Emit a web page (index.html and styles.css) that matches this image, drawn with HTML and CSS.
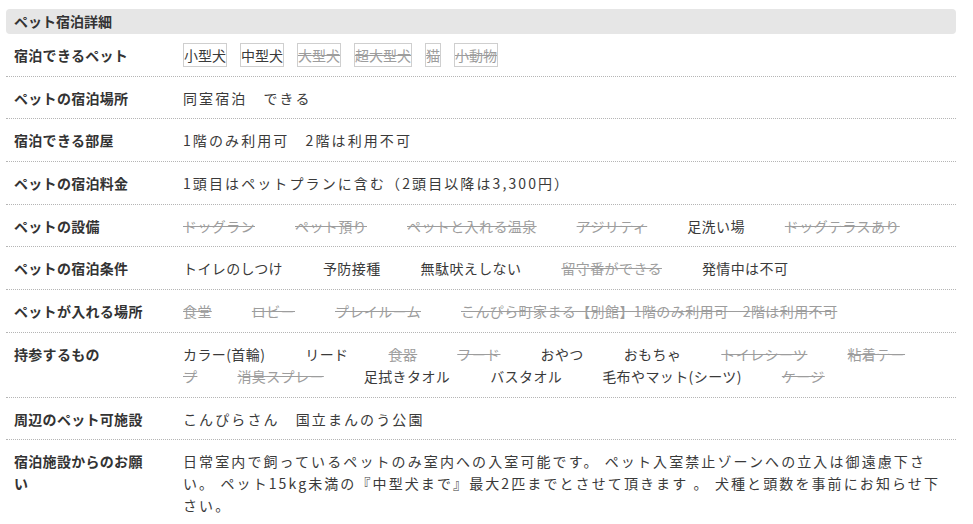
FILE: index.html
```html
<!DOCTYPE html>
<html lang="ja">
<head>
<meta charset="utf-8">
<link rel="stylesheet" href="styles.css">
</head>
<body>
<section class="detail">
  <h2 class="detail-title">ペット宿泊詳細</h2>
  <div class="row">
    <div class="label">宿泊できるペット</div>
    <div class="value boxes">
      <span class="box">小型犬</span><span class="box">中型犬</span><span class="box off">大型犬</span><span class="box off">超大型犬</span><span class="box off">猫</span><span class="box off">小動物</span>
    </div>
  </div>
  <div class="row">
    <div class="label">ペットの宿泊場所</div>
    <div class="value spaced">同室宿泊　できる</div>
  </div>
  <div class="row">
    <div class="label">宿泊できる部屋</div>
    <div class="value spaced">1階のみ利用可　2階は利用不可</div>
  </div>
  <div class="row">
    <div class="label">ペットの宿泊料金</div>
    <div class="value spaced">1頭目はペットプランに含む（2頭目以降は3,300円）</div>
  </div>
  <div class="row">
    <div class="label">ペットの設備</div>
    <div class="value items"><span class="item off">ドッグラン</span><span class="item off">ペット預り</span><span class="item off">ペットと入れる温泉</span><span class="item off">アジリティ</span><span class="item">足洗い場</span><span class="item off">ドッグテラスあり</span></div>
  </div>
  <div class="row">
    <div class="label">ペットの宿泊条件</div>
    <div class="value items"><span class="item">トイレのしつけ</span><span class="item">予防接種</span><span class="item">無駄吠えしない</span><span class="item off">留守番ができる</span><span class="item">発情中は不可</span></div>
  </div>
  <div class="row">
    <div class="label">ペットが入れる場所</div>
    <div class="value items"><span class="item off">食堂</span><span class="item off">ロビー</span><span class="item off">プレイルーム</span><span class="item off">こんぴら町家まる【別館】1階のみ利用可　2階は利用不可</span></div>
  </div>
  <div class="row">
    <div class="label">持参するもの</div>
    <div class="value items"><span class="item">カラー(首輪)</span><span class="item">リード</span><span class="item off">食器</span><span class="item off">フード</span><span class="item">おやつ</span><span class="item">おもちゃ</span><span class="item off">トイレシーツ</span><span class="item off">粘着テープ</span><span class="item off">消臭スプレー</span><span class="item">足拭きタオル</span><span class="item">バスタオル</span><span class="item">毛布やマット(シーツ)</span><span class="item off">ケージ</span></div>
  </div>
  <div class="row">
    <div class="label">周辺のペット可施設</div>
    <div class="value spaced">こんぴらさん　国立まんのう公園</div>
  </div>
  <div class="row">
    <div class="label">宿泊施設からのお願い</div>
    <div class="value spaced">日常室内で飼っているペットのみ室内への入室可能です。 ペット入室禁止ゾーンへの立入は御遠慮下さい。 ペット15kg未満の『中型犬まで』最大2匹までとさせて頂きます 。 犬種と頭数を事前にお知らせ下さい。</div>
  </div>
</section>
</body>
</html>
```
FILE: styles.css
```css
* { box-sizing: border-box; }
body {
  margin: 0;
  background: #fff;
  color: #333;
  font-family: "Noto Sans CJK JP", "Noto Sans", sans-serif;
  font-size: 14px;
}
.detail {
  width: 950px;
  margin: 9px 0 0 6px;
}
.detail-title {
  margin: 0;
  height: 25px;
  line-height: 25px;
  padding-left: 8px;
  background: #e6e6e6;
  border-radius: 4px;
  font-size: 14px;
  font-weight: bold;
  color: #333;
}
.row {
  display: flex;
  padding: 10px 5px 9.7px 8px;
  border-bottom: 1px dotted #b5b5b5;
  line-height: 22px;
}
.label {
  width: 134px;
  flex: none;
  margin-right: 35px;
  font-weight: bold;
  letter-spacing: 0.3px;
  color: #333;
}
.value {
  flex: 1;
  min-width: 0;
  color: #3a3a3a;
}
.spaced { letter-spacing: 2.1px; }
.boxes {
  display: flex;
  gap: 13px;
  align-items: center;
  height: 22px;
}
.box {
  border: 1px solid #cfcfcf;
  padding: 0;
  line-height: 22px;
}
.items { letter-spacing: 0.4px; }
.item { margin-right: 40px; }
.off {
  color: #9d9d9d;
  text-decoration: line-through;
}
```
